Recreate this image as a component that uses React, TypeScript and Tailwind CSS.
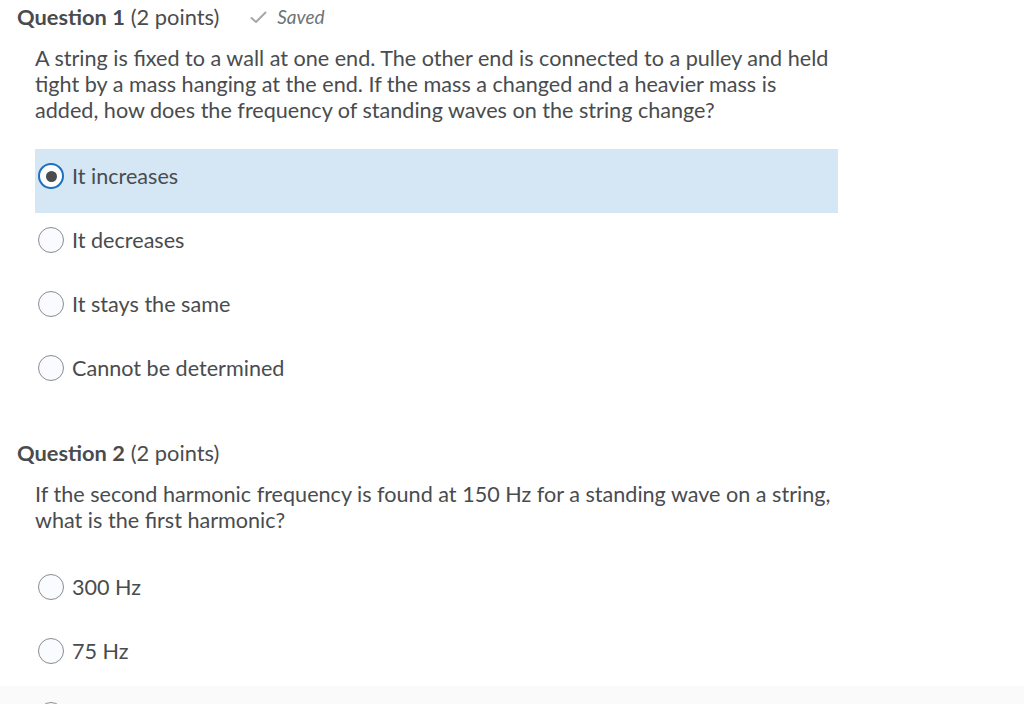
import React from "react"

type Option = { label: string; selected?: boolean }

function Radio({ selected }: { selected?: boolean }) {
  if (selected) {
    return (
      <span className="flex h-[26px] w-[26px] shrink-0 items-center justify-center rounded-full border-[2px] border-[#1e6fc0] bg-white">
        <span className="h-[11px] w-[11px] rounded-full bg-[#4a4c4e]" />
      </span>
    )
  }
  return <span className="h-[26px] w-[26px] shrink-0 rounded-full border border-[#8a8c8e] bg-[#f9fbff]" />
}

function OptionRow({ label, selected }: Option) {
  return (
    <div className={`flex h-[64px] w-[803px] items-start gap-[8px] pl-[3px] pt-[14px] ${selected ? "bg-[#d5e6f5]" : ""}`}>
      <Radio selected={selected} />
      <span className="text-[21.6px] leading-[26px] text-[#494c4e]">{label}</span>
    </div>
  )
}

function QuestionHeader({ n, saved }: { n: number; saved?: boolean }) {
  return (
    <div className="flex h-[28px] items-center pl-[17px] text-[21.8px] leading-[28px] text-[#494c4e]">
      <span className="font-bold">Question {n}</span>
      <span className="ml-[6px]">(2 points)</span>
      {saved && (
        <span className="ml-[31px] flex items-center gap-[10px] text-[19px] italic text-[#6e7376]">
          <svg width="17" height="13" viewBox="0 0 17 13" fill="none">
            <path d="M1.5 7 L6 11 L15.5 1.5" stroke="#a3a8ab" strokeWidth="2" strokeLinecap="round" strokeLinejoin="round" />
          </svg>
          Saved
        </span>
      )}
    </div>
  )
}

export default function App() {
  return (
    <div className="h-[704px] w-[1024px] overflow-hidden bg-white font-['Lato','Liberation_Sans',sans-serif]">
      <div className="pt-[3px]">
        <QuestionHeader n={1} saved />
        <p className="ml-[35px] mt-[14px] w-[803px] text-[21.6px] leading-[26px] text-[#494c4e]">
          A string is fixed to a wall at one end. The other end is connected to a pulley and held tight by a mass
          hanging at the end. If the mass a changed and a heavier mass is added, how does the frequency of standing
          waves on the string change?
        </p>
        <div className="ml-[35px] mt-[26px]">
          <OptionRow label="It increases" selected />
          <OptionRow label="It decreases" />
          <OptionRow label="It stays the same" />
          <OptionRow label="Cannot be determined" />
        </div>
      </div>

      <div className="mt-[34px]">
        <QuestionHeader n={2} />
        <p className="ml-[35px] mt-[14px] w-[803px] text-[21.6px] leading-[26px] text-[#494c4e]">
          If the second harmonic frequency is found at 150 Hz for a standing wave on a string, what is the first
          harmonic?
        </p>
        <div className="ml-[35px] mt-[27px]">
          <OptionRow label="300 Hz" />
          <OptionRow label="75 Hz" />
        </div>
        <div className="-mt-[2px] bg-[#fafafa] pl-[35px] pt-[2px]">
          <OptionRow label="" />
        </div>
      </div>
    </div>
  )
}
